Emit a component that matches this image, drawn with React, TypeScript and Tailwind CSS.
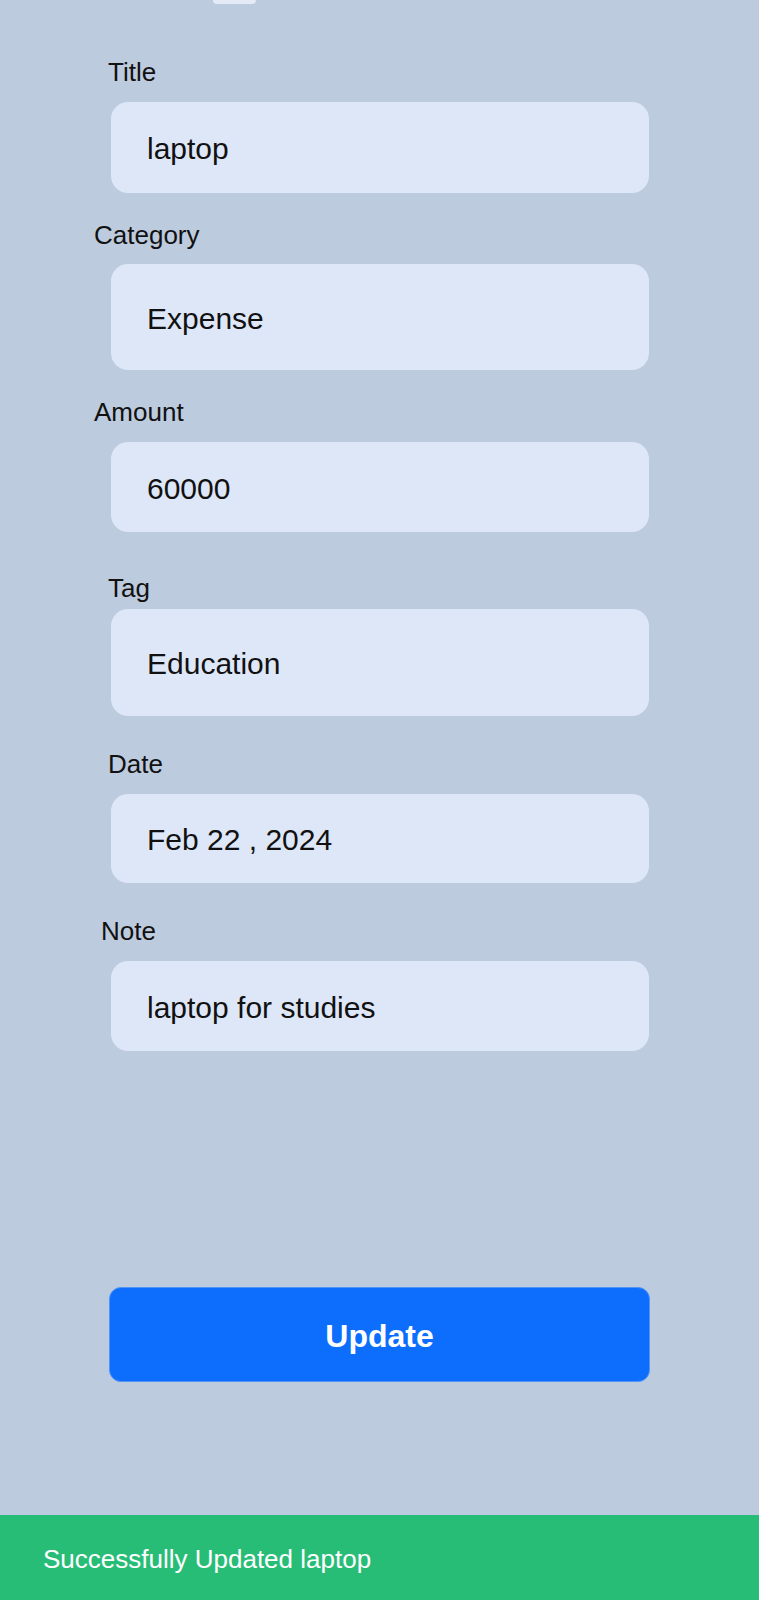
import React from "react";

type Field = {
  label: string;
  value: string;
  labelX: string;
  labelMt: string;
  boxMt: string;
  boxH: string;
};

const fields: Field[] = [
  { label: "Title", value: "laptop", labelX: "ml-[108px]", labelMt: "mt-[53px]", boxMt: "mt-[15px]", boxH: "h-[91px]" },
  { label: "Category", value: "Expense", labelX: "ml-[94px]", labelMt: "mt-[27px]", boxMt: "mt-[14px]", boxH: "h-[106px]" },
  { label: "Amount", value: "60000", labelX: "ml-[94px]", labelMt: "mt-[27px]", boxMt: "mt-[15px]", boxH: "h-[90px]" },
  { label: "Tag", value: "Education", labelX: "ml-[108px]", labelMt: "mt-[41px]", boxMt: "mt-[6px]", boxH: "h-[107px]" },
  { label: "Date", value: "Feb 22 , 2024", labelX: "ml-[108px]", labelMt: "mt-[33px]", boxMt: "mt-[15px]", boxH: "h-[89px]" },
  { label: "Note", value: "laptop for studies", labelX: "ml-[101px]", labelMt: "mt-[33px]", boxMt: "mt-[15px]", boxH: "h-[90px]" },
];

export default function App() {
  return (
    <div
      className="flex h-[1600px] w-full flex-col overflow-hidden bg-[#bccbdd] text-[#111111]"
      style={{ fontFamily: '"Liberation Sans", Arial, sans-serif' }}
    >
      <div className="ml-[213px] h-[4px] w-[43px] rounded-b-[4px] bg-[#e4ebf6]" />

      {fields.map((f) => (
        <div key={f.label} className="flex flex-col">
          <div className={`${f.labelMt} ${f.labelX} h-[30px] text-[26px] leading-[30px]`}>{f.label}</div>
          <div
            className={`${f.boxMt} ${f.boxH} ml-[111px] flex w-[538px] items-center rounded-[17px] bg-[#dee7f8] pl-[36px] pt-[2px] text-[30px]`}
          >
            {f.value}
          </div>
        </div>
      ))}

      <button className="ml-[109px] mt-[236px] flex h-[95px] w-[541px] items-center justify-center rounded-[12px] border border-[#4f93f4] bg-[#0d6efd] pt-[2px] text-[32px] font-bold text-white">
        Update
      </button>

      <div className="mt-auto flex h-[85px] w-full items-center bg-[#28bd77] pl-[43px] pt-[4px] text-[26px] text-white">
        Successfully Updated laptop
      </div>
    </div>
  );
}
